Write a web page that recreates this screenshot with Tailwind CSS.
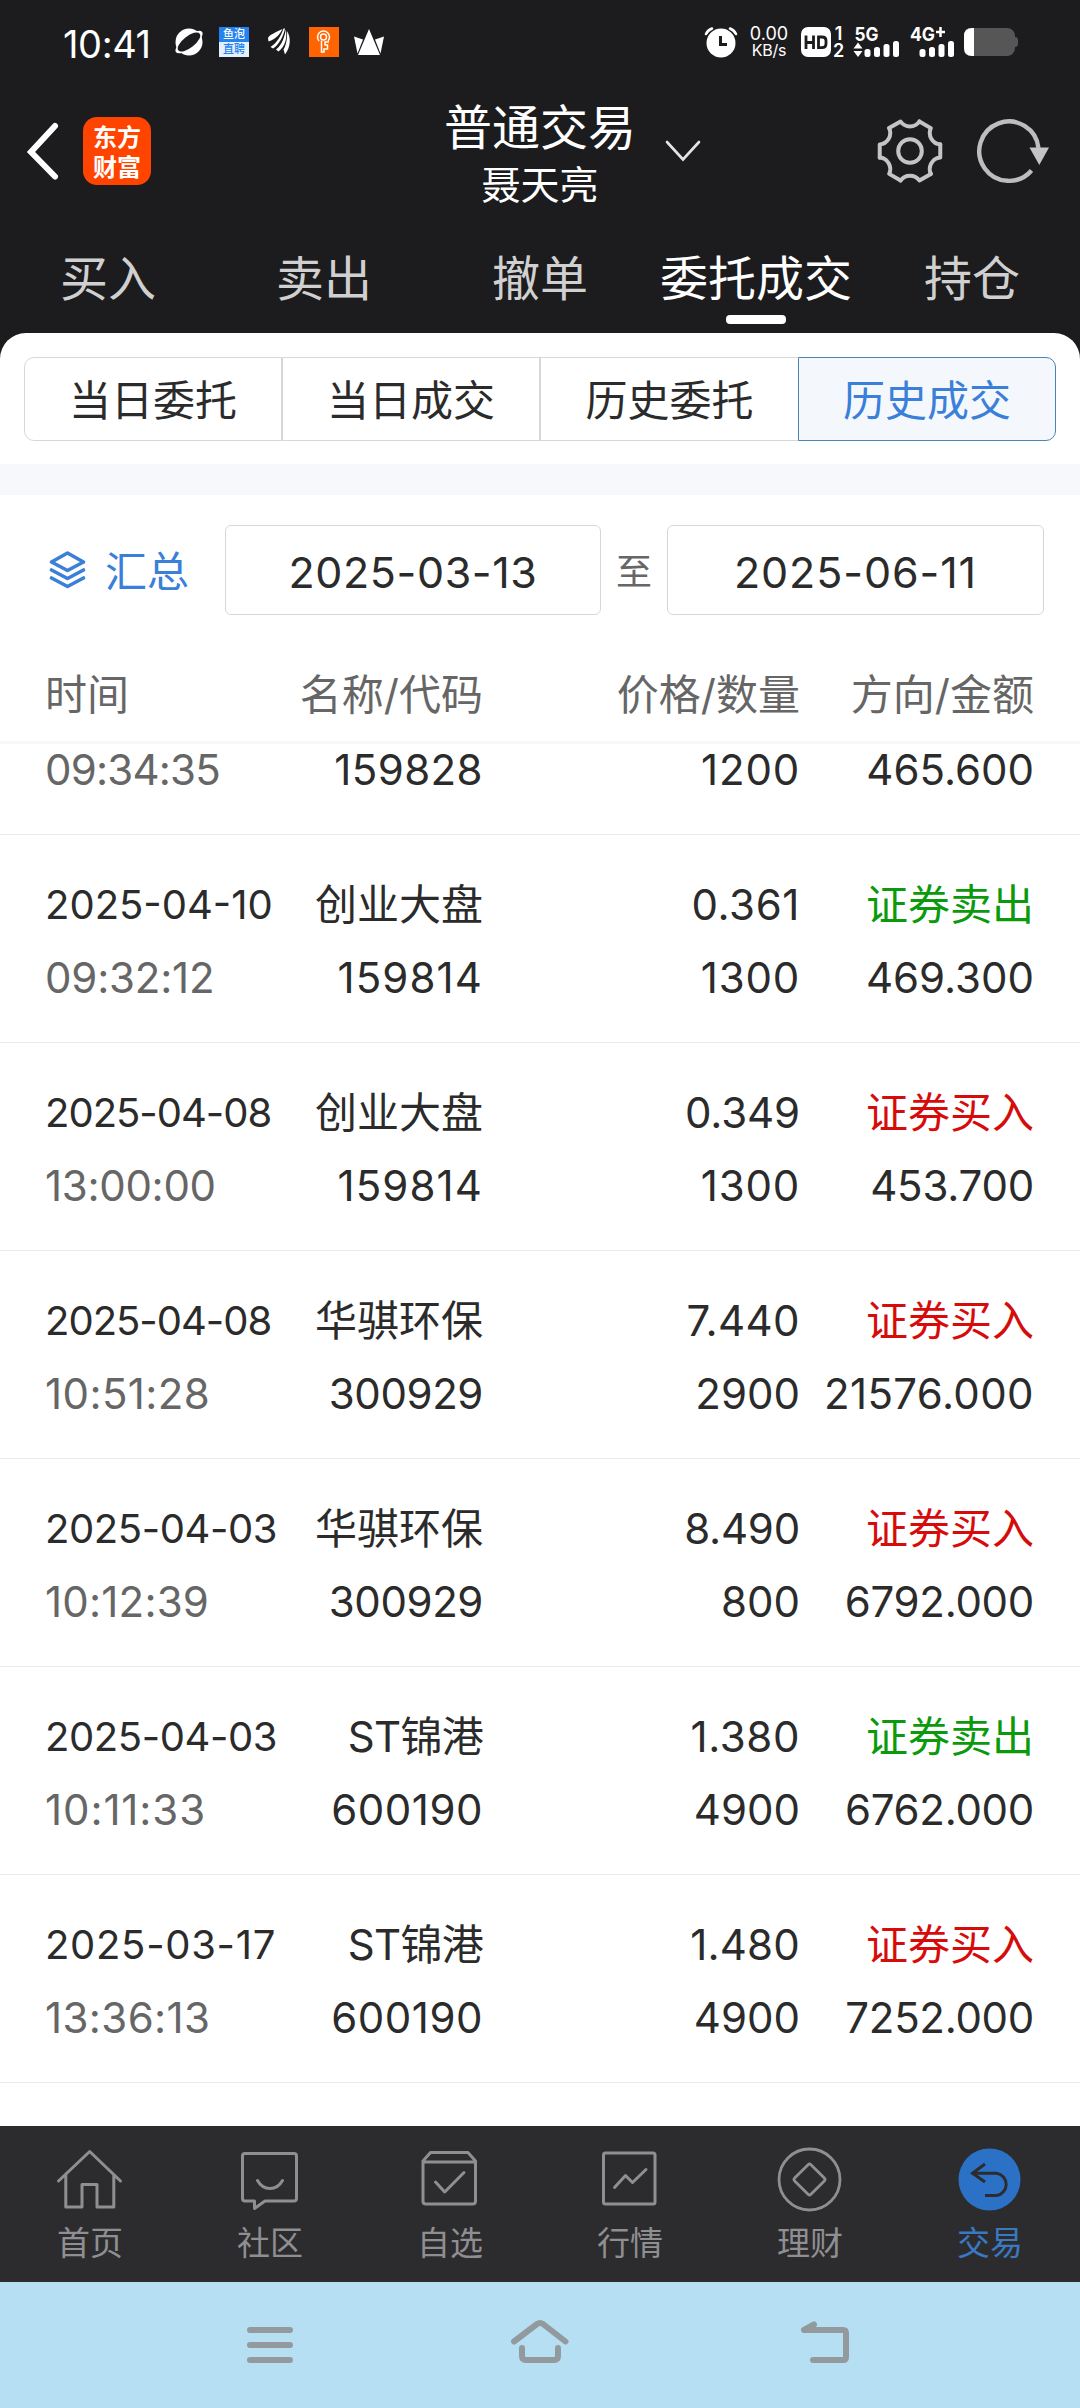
<!DOCTYPE html>
<html lang="zh-CN">
<head>
<meta charset="utf-8">
<title>普通交易</title>
<script src="https://cdn.jsdelivr.net/npm/@tailwindcss/browser@4"></script>
</head>
<body class="flex h-[2408px] w-[1080px] flex-col overflow-hidden bg-[#1c1c1e] font-['Inter','Noto_Sans_CJK_SC',sans-serif] text-[42px]">

<!-- status bar -->
<div class="flex h-[84px] items-center pl-[63px] text-white">
  <span class="w-[111px] text-[38px] leading-[84px] tracking-[-0.4px] pt-[3px]">10:41</span>
  <svg class="w-[30px]" height="30" viewBox="0 0 30 30"><circle cx="15" cy="15" r="13.5" fill="#fff"/><ellipse cx="15" cy="15" rx="16.5" ry="6.2" transform="rotate(-38 15 15)" fill="#fff"/><ellipse cx="15" cy="15" rx="13.6" ry="5.8" transform="rotate(-38 15 15)" fill="#1c1c1e"/></svg>
  <div class="ml-[15px] h-[30px] w-[30px] bg-[#2583f0] text-center text-[11px] font-medium leading-[15px]">
    <div class="h-[15px]">鱼泡</div>
    <div class="h-[15px] bg-[#e3f0fe] text-[#2583f0]">直聘</div>
  </div>
  <svg class="ml-[19px] w-[23px]" height="30" viewBox="0 0 23 30" fill="#fff"><path d="M0 11C2 7 9 5 14.500 2C12 7 8 12 0.500 14.500Z"/><path d="M2.500 20C9 16 13 9 15.500 1.500L17 1.500C15.500 9 11 18 5 21.500Z"/><path d="M8 22.500C14 18 16.500 10 17.800 2.500C19.500 11 17 20 10.500 24.500Z"/><path d="M15.500 22.500C18.500 18 19.500 10 19 4C23 10 23 20 17 27.500Z"/></svg>
  <div class="ml-[18px] flex h-[30px] w-[30px] items-center justify-center bg-[#ff6400]">
    <svg width="16" height="24" viewBox="0 0 16 24" fill="none" stroke="#fff" stroke-width="1.500"><path d="M3 11A6 6 0 1 1 12 11"/><circle cx="7.500" cy="7" r="3"/><path d="M5.500 10.500V22H8V19H11.500V15H9V12H13"/></svg>
  </div>
  <svg class="ml-[15px] w-[30px]" height="30" viewBox="0 0 30 30" fill="#fff"><path d="M15 2L26 28H4Z"/><path d="M0 9.500L9 12.500L3.500 26.500Z"/><path d="M30 9.500L21 12.500L26.500 26.500Z"/></svg>

  <svg class="ml-[320px] w-[34px]" height="32" viewBox="0 0 34 32"><circle cx="17" cy="17" r="14.500" fill="#fff"/><path d="M16.500 10V18.500H23" fill="none" stroke="#1c1c1e" stroke-width="3"/><path d="M2 8Q4 4 8 2.500M32 8Q30 4 26 2.500" fill="none" stroke="#fff" stroke-width="2.600" stroke-linecap="round"/></svg>
  <div class="ml-[11px] w-[40px] whitespace-nowrap text-center text-[18px] leading-[17px]">
    <div>0.00</div>
    <div class="text-[16px] tracking-[-0.2px]">KB/s</div>
  </div>
  <svg class="ml-[12px] w-[30px]" height="30" viewBox="0 0 30 30"><rect width="30" height="30" rx="7" fill="#fff"/><path d="M5 8.500V22M12.500 8.500V22M5 15.500H12.500M17.500 10V20.700H21Q25 20.700 25 17V13.500Q25 10 21 10Z" fill="none" stroke="#1c1c1e" stroke-width="2.800"/></svg>
  <div class="ml-[1px] w-[13px] text-center text-[18px] font-semibold leading-[17px]"><div>1</div><div>2</div></div>
  <svg class="ml-[8px] w-[47px] overflow-visible" height="30" viewBox="0 0 47 30" fill="#fff"><text x="1.500" y="14" font-size="19" font-weight="700" textLength="24" lengthAdjust="spacingAndGlyphs">5G</text><path d="M5 15.500L9.500 21.500H.5ZM5 30L9.500 24H.5Z"/><rect x="11.500" y="22" width="6" height="8" rx="2.500"/><rect x="21" y="20" width="6" height="10" rx="2.500"/><rect x="30.500" y="17" width="6" height="13" rx="2.500"/><rect x="40" y="14" width="6" height="16" rx="2.500"/></svg>
  <svg class="ml-[10px] w-[46px] overflow-visible" height="30" viewBox="0 0 46 30" fill="#fff"><text x="0" y="14" font-size="19" font-weight="700" textLength="25" lengthAdjust="spacingAndGlyphs">4G</text><path d="M30.500 0V10M26 5H35" stroke="#fff" stroke-width="2.500"/><rect x="9.500" y="22" width="6" height="8" rx="2.500"/><rect x="19" y="20" width="6" height="10" rx="2.500"/><rect x="28.500" y="17" width="6" height="13" rx="2.500"/><rect x="38" y="14" width="6" height="16" rx="2.500"/></svg>
  <svg class="ml-[8px] w-[55px]" height="28" viewBox="0 0 55 28"><rect width="51" height="28" rx="8" fill="#565656"/><path d="M51 9Q54 9 54 12V16Q54 19 51 19Z" fill="#565656"/><path d="M8 0H10V28H8Q0 28 0 20V8Q0 0 8 0Z" fill="#fff"/></svg>
</div>

<!-- title bar -->
<div class="flex h-[134px] items-center">
  <svg class="ml-[24px] w-[40px]" height="60" viewBox="0 0 40 60" fill="none" stroke="#fff" stroke-width="6" stroke-linecap="round"><path d="M31 5L7 31L31 55.500"/></svg>
  <div class="ml-[19px] flex h-[68px] w-[68px] flex-col items-center justify-center rounded-[14px] bg-[#ff4400] font-['Noto_Sans_CJK_SC',sans-serif] text-[24px] font-bold leading-[30px] text-white">
    <div>东方</div><div>财富</div>
  </div>
  <div class="ml-[293px] w-[192px] pt-[8px] text-center text-white">
    <div class="text-[48px] leading-[60px]">普通交易</div>
    <div class="text-[39px] leading-[54px]">聂天亮</div>
  </div>
  <svg class="ml-[28px] w-[38px]" height="24" viewBox="0 0 38 24" fill="none" stroke="#e4e4e4" stroke-width="2.600" stroke-linecap="round"><path d="M3 3L19 20.500L35 3"/></svg>
  <svg class="ml-[173px] w-[70px]" height="70" viewBox="-35 -35 70 70" fill="none" stroke="#c4c4c4" stroke-width="4" stroke-linejoin="round" stroke-linecap="round">
    <path d="M9.400-29.500C5-23-5-23-9.400-29.500L-20.900-22.900"/>
    <path transform="rotate(60)" d="M9.400-29.500C5-23-5-23-9.400-29.500L-20.900-22.900"/>
    <path transform="rotate(120)" d="M9.400-29.500C5-23-5-23-9.400-29.500L-20.900-22.900"/>
    <path transform="rotate(180)" d="M9.400-29.500C5-23-5-23-9.400-29.500L-20.900-22.900"/>
    <path transform="rotate(240)" d="M9.400-29.500C5-23-5-23-9.400-29.500L-20.900-22.900"/>
    <path transform="rotate(300)" d="M9.400-29.500C5-23-5-23-9.400-29.500L-20.900-22.900"/>
    <circle r="11.800"/>
  </svg>
  <svg class="ml-[29px] w-[80px]" height="70" viewBox="-35 -35 80 70"><path d="M29.500-3A29.700 29.700 0 1 0 22.500 19.500" fill="none" stroke="#bdbdbd" stroke-width="4.400"/><path d="M20.500-3.500H40L30.300 14Z" fill="#c4c4c4"/></svg>
</div>

<!-- primary tabs -->
<div class="grid h-[115px] grid-cols-5 pt-[37px] text-center text-[48px] leading-[48px] text-[#d0d0d0]">
  <div>买入</div>
  <div>卖出</div>
  <div>撤单</div>
  <div class="flex flex-col items-center text-white">委托成交<span class="mt-[12px] h-[9px] w-[60px] rounded-[4px] bg-white"></span></div>
  <div>持仓</div>
</div>

<!-- content panel -->
<div class="flex min-h-0 flex-1 flex-col overflow-hidden rounded-t-[26px] bg-white pt-[24px] text-[#2b2b2b]">
  <div class="mx-[24px] grid h-[84px] shrink-0 grid-cols-4 text-center leading-[79px]">
    <div class="rounded-l-[10px] border border-[#d5d8da] pt-[3px]">当日委托</div>
    <div class="border border-[#d5d8da] pt-[3px]">当日成交</div>
    <div class="border border-r-0 border-[#d5d8da] pt-[3px]">历史委托</div>
    <div class="rounded-r-[10px] border border-[#4a84b4] bg-[#f4f8fd] pt-[3px] text-[#3a80d8]">历史成交</div>
  </div>
  <div class="mt-[23px] h-[31px] shrink-0 bg-[#f6f8fb]"></div>

  <div class="mt-[30px] flex h-[90px] shrink-0 items-center pl-[48px]">
    <svg class="w-[38px]" height="40" viewBox="0 0 38 40" fill="none" stroke="#3a80d8" stroke-width="3.600" stroke-linejoin="round" stroke-linecap="round"><path d="M19.500 3L35.500 12L19.500 20.500L3.500 12Z"/><path d="M3.500 20L19.500 28.500L35.500 20M3.500 28L19.500 36.500L35.500 28"/></svg>
    <span class="ml-[19px] w-[84px] pt-[2px] text-[#3a80d8]">汇总</span>
    <div class="ml-[36px] h-[90px] w-[376px] rounded-[6px] border border-[#d5d8da] text-center text-[43px] leading-[92px] tracking-[0.6px]">2025-03-13</div>
    <span class="w-[66px] pt-[3px] text-center text-[36px] text-[#666]">至</span>
    <div class="h-[90px] w-[377px] rounded-[6px] border border-[#d5d8da] text-center text-[43px] leading-[92px] tracking-[0.9px]">2025-06-11</div>
  </div>

  <div class="grid h-[129px] shrink-0 grid-cols-[240px_198px_317px_234px] border-b-[3px] border-[#f5f8f9] pl-[45px] pt-[59px] text-right leading-[42px] text-[#666]">
    <div class="text-left">时间</div><div>名称/代码</div><div>价格/数量</div><div>方向/金额</div>
  </div>

  <div class="min-h-0 flex-1 overflow-hidden"><div id="rows" class="mt-[-117px]"></div></div>
</div>

<!-- app tab bar -->
<div class="grid h-[156px] shrink-0 grid-cols-6 justify-items-center bg-[#2c2c2e] pt-[18px] text-center text-[33px] leading-[40px] text-[#8f8f92]">
  <div><svg class="mx-auto mb-[7px]" width="80" height="72" viewBox="0 0 80 72" fill="none" stroke="#8f8f92" stroke-width="3" stroke-linecap="round" stroke-linejoin="round"><path d="M8.500 37L39.700 7.500L70.500 37M15.800 31V63H32V40.500H47V63H63.800V31"/></svg>首页</div>
  <div><svg class="mx-auto mb-[7px]" width="80" height="72" viewBox="0 0 80 72" fill="none" stroke="#8f8f92" stroke-width="3" stroke-linecap="round" stroke-linejoin="round"><path d="M15 9.500H64Q66.500 9.500 66.500 12V54.500Q66.500 57 64 57H35L24.500 64.500V57H15Q12.500 57 12.500 54.500V12Q12.500 9.500 15 9.500ZM27.500 36.500Q32 44.500 40 44.500T52.500 36.500"/></svg>社区</div>
  <div><svg class="mx-auto mb-[7px]" width="80" height="72" viewBox="0 0 80 72" fill="none" stroke="#8f8f92" stroke-width="3" stroke-linecap="round" stroke-linejoin="round"><path d="M13 17L20.500 8.500H58L65.500 17V57Q65.500 60 62.500 60H16Q13 60 13 57ZM13 18H65.500M25.500 38L34.700 48L54 28.500"/></svg>自选</div>
  <div><svg class="mx-auto mb-[7px]" width="80" height="72" viewBox="0 0 80 72" fill="none" stroke="#8f8f92" stroke-width="3" stroke-linecap="round" stroke-linejoin="round"><rect x="13.500" y="9" width="51.500" height="51" rx="2"/><path d="M24.500 43.500L35.500 31.500L42.500 38.500L56 25.500"/></svg>行情</div>
  <div><svg class="mx-auto mb-[7px]" width="80" height="72" viewBox="0 0 80 72" fill="none" stroke="#8f8f92" stroke-width="2.800"><circle cx="39.500" cy="35.500" r="30.500"/><rect x="28" y="24" width="23" height="23" rx="2" transform="rotate(45 39.500 35.500)"/></svg>理财</div>
  <div class="text-[#3a78c0]"><svg class="mx-auto mb-[7px]" width="80" height="72" viewBox="0 0 80 72" fill="none" stroke="#2c2c2e" stroke-width="3"><circle cx="39.500" cy="35.500" r="31" fill="#2b72c6" stroke="none"/><path d="M35 20L22.500 29.300L35 38M23 29.300H46.500A11.200 11.200 0 0 1 46.500 51.500H35"/></svg>交易</div>
</div>

<!-- system navigation -->
<div class="flex h-[126px] shrink-0 bg-[#b6dff3]">
  <svg class="ml-[240px]" width="60" height="126" viewBox="240 0 60 126" fill="none" stroke="#939a9e" stroke-width="6" stroke-linecap="round"><path d="M250 48H290M250 63H290M250 78H290"/></svg>
  <svg class="ml-[200px]" width="80" height="126" viewBox="500 0 80 126" fill="none" stroke="#939a9e" stroke-width="6" stroke-linecap="round" stroke-linejoin="round"><path d="M514 59.500L537 42Q540 40 543 42L565.500 59.500M522 66V74Q522 78 526 78H554Q558 78 558 74V66"/></svg>
  <svg class="ml-[210px]" width="70" height="126" viewBox="790 0 70 126" fill="none" stroke="#939a9e" stroke-width="6" stroke-linecap="round" stroke-linejoin="round"><path d="M814 42.500L804 48H843Q846 48 846 51V75Q846 78 843 78H813"/></svg>
</div>

<script>
// date, time, name, code, price, qty, side, amount; numbers after "|" are tracking in px.
// The list is scrolled so that only the second line of the first trade is in view.
const trades = [
  ['','09:34:35|-.8','','159828|.4','','1200|.8','','465.600|0'],
  ['2025-04-10|0','09:32:12|-.2','创业大盘|0','159814|1.1','0.361|.6','1300|.8','卖','469.300|0'],
  ['2025-04-08|-1','13:00:00|-.3','创业大盘|0','159814|1.1','0.349|-.1','1300|.8','买','453.700|-.2'],
  ['2025-04-08|-1','10:51:28|.4','华骐环保|0','300929|-.4','7.440|.4','2900|0','买','21576.000|.4'],
  ['2025-04-03|-.4','10:12:39|.2','华骐环保|0','300929|-.4','8.490|-.2','800|0','买','6792.000|-.3'],
  ['2025-04-03|-.4','10:11:33|.9','ST锦港|-.7','600190|.5','1.380|.6','4900|0','卖','6762.000|-.3'],
  ['2025-03-17|.7','13:36:13|.4','ST锦港|-.7','600190|.5','1.480|.2','4900|0','买','7252.000|-.3'],
];
const cell = (v, cls = '') => {
  const [t, ls] = v.split('|');
  return `<div class="${cls}"><span style="letter-spacing:${ls || 0}px">${t}</span></div>`;
};
const side = { '卖': ['证券卖出', 'text-[#0b9a0b]'], '买': ['证券买入', 'text-[#d60c0c]'], '': ['', ''] };
document.getElementById('rows').innerHTML = trades.map(r => `
  <div class="grid h-[208px] grid-cols-[240px_198px_317px_234px] grid-rows-[73px_72px] whitespace-nowrap border-b border-[#ebebeb] pl-[45px] pt-[34px] text-right leading-[72px]">
    ${cell(r[0], 'text-left text-[40px]')}${cell(r[2])}${cell(r[4])}${cell(...side[r[6]])}
    ${cell(r[1], 'text-left text-[#666]')}${cell(r[3])}${cell(r[5])}${cell(r[7])}
  </div>`).join('');
</script>
</body>
</html>
